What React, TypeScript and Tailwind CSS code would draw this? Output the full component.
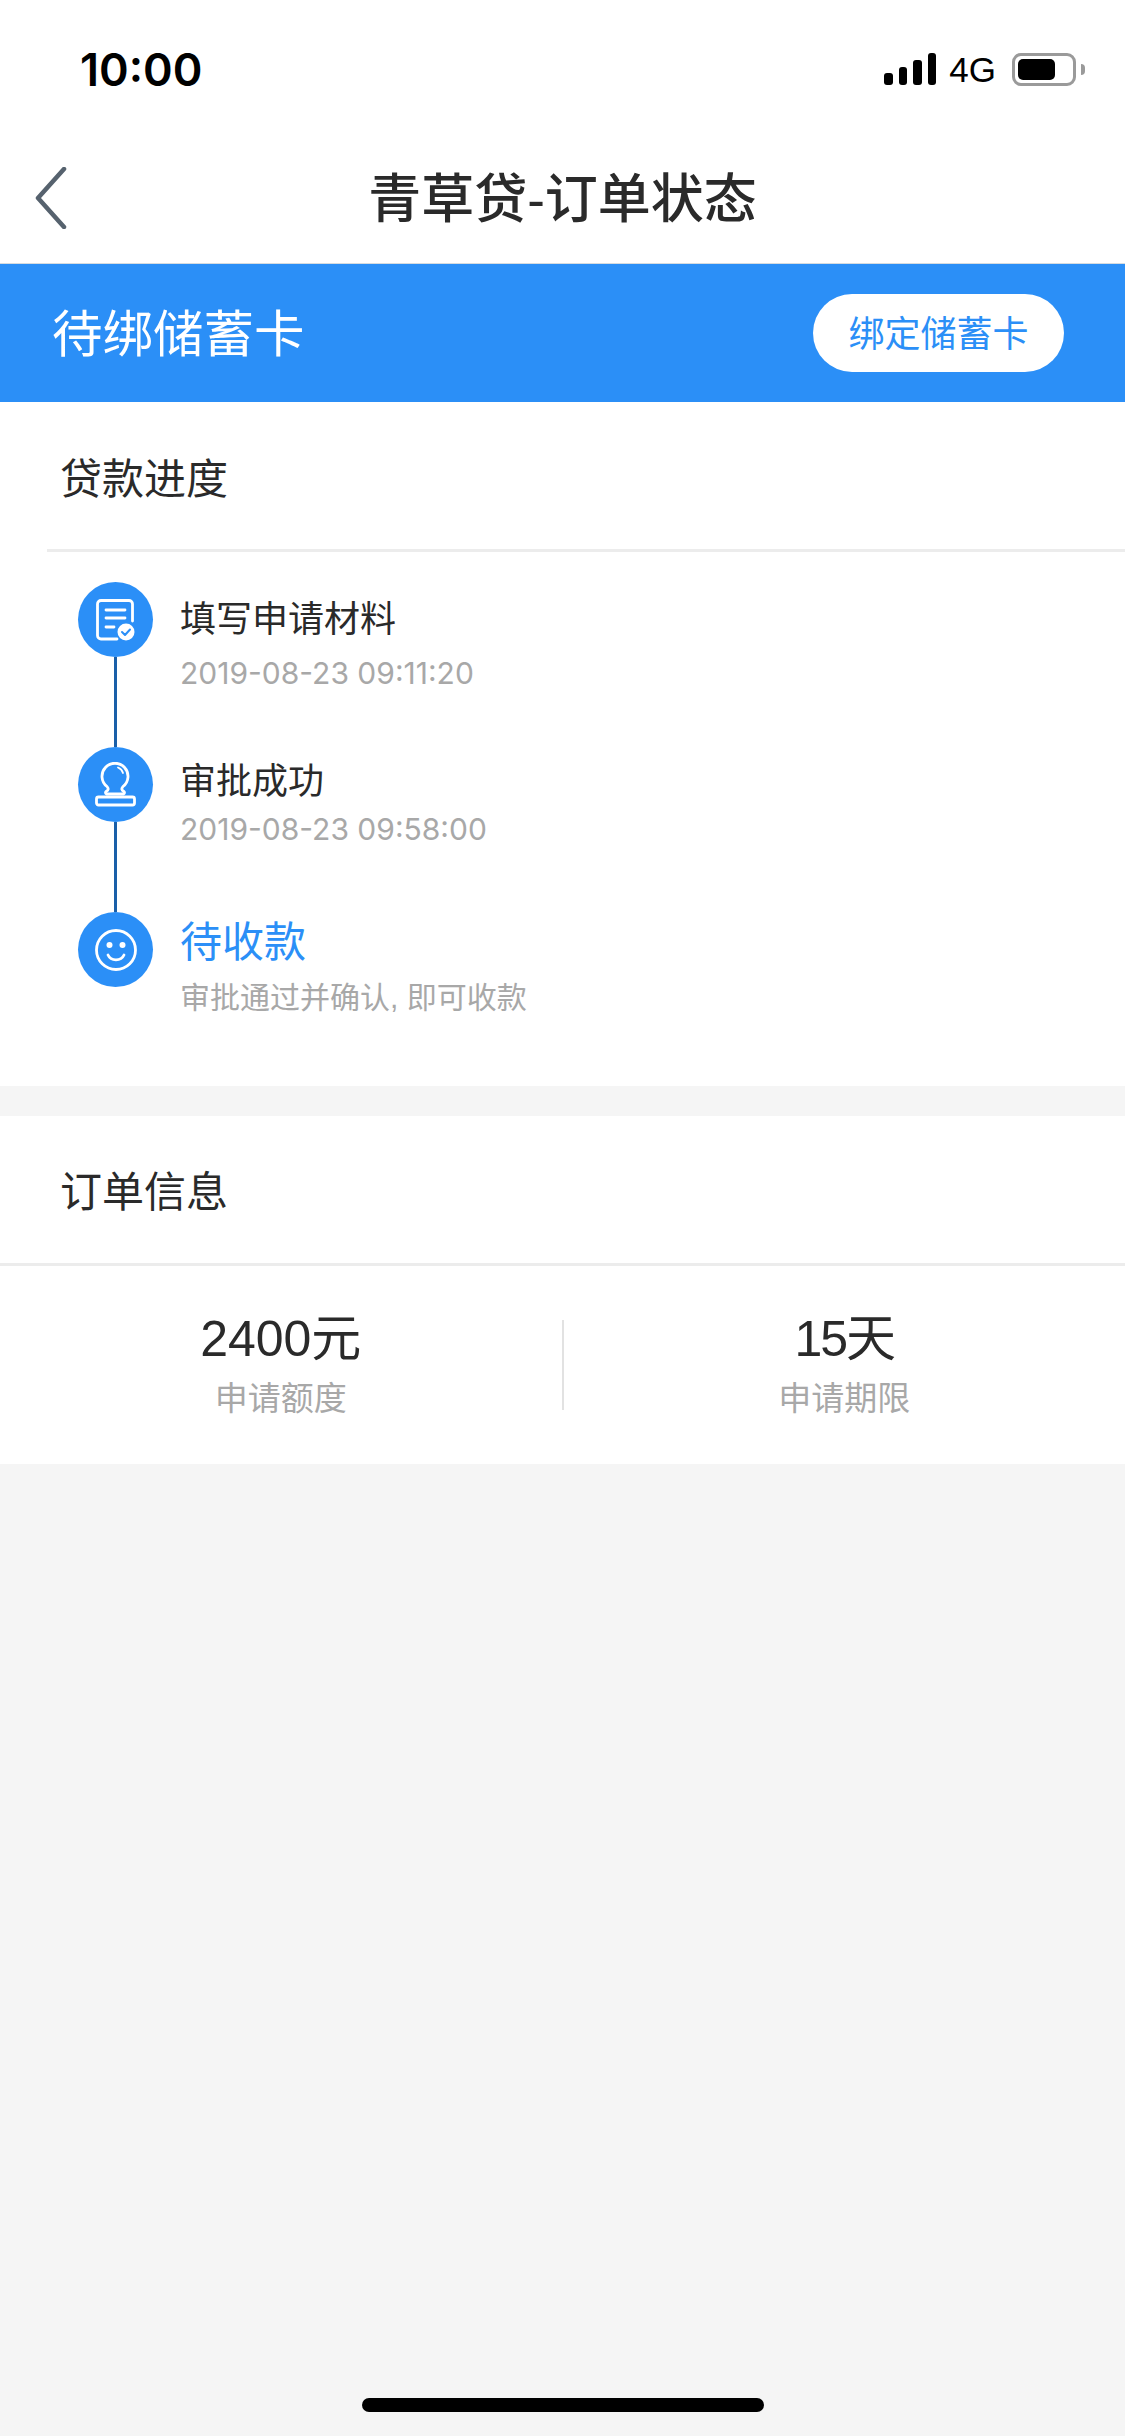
const steps = [
  {
    title: "填写申请材料",
    sub: "2019-08-23 09:11:20",
    icon: "doc",
    titleCls: "mt-[18px] text-[36px] leading-[40px]",
    subCls: "mt-[15px] font-['Inter'] text-[30px] leading-[36px] text-[#a8a8a8]",
  },
  {
    title: "审批成功",
    sub: "2019-08-23 09:58:00",
    icon: "stamp",
    titleCls: "mt-[15px] text-[36px] leading-[40px]",
    subCls: "mt-[9px] font-['Inter'] text-[30px] leading-[36px] text-[#a8a8a8]",
  },
  {
    title: "待收款",
    sub: "审批通过并确认, 即可收款",
    icon: "smile",
    titleCls: "mt-[6px] text-[42px] leading-[50px] text-[#2b8ff7]",
    subCls: "mt-[12px] text-[30px] leading-[36px] text-[#a8a8a8]",
  },
];

function StepIcon({ name }: { name: string }) {
  if (name === "doc") {
    return (
      <svg width="40" height="42" viewBox="0 0 40 42" fill="none" stroke="#fff" strokeWidth="2.8" strokeLinecap="round">
        <path d="M21 40H5a3.500 3.500 0 0 1-3.500-3.500V5A3.500 3.500 0 0 1 5 1.500h28A3.500 3.500 0 0 1 36.500 5v17" />
        <path d="M10 11h19M10 19h19M10 28h8" />
        <circle cx="30" cy="33" r="8.500" fill="#fff" stroke="none" />
        <path d="M26 33l3 3 5-5.500" stroke="#2b8ff7" strokeWidth="2" strokeLinejoin="round" />
      </svg>
    );
  }
  if (name === "stamp") {
    return (
      <svg width="41" height="45" viewBox="0 0 41 45" fill="none" stroke="#fff" strokeWidth="2.8" strokeLinecap="round" strokeLinejoin="round">
        <path d="M12 24.500A13 13 0 1 1 28 24.500C26.500 26.500 26 28 29 29.500a1.500 1.500 0 0 1-.5 2.500H11.500a1.500 1.500 0 0 1-.5-2.500C14 28 13.500 26.500 12 24.500z" />
        <path d="M23 5.500a8.500 8.500 0 0 1 5 5.500" strokeWidth="1.800" />
        <rect x="1.500" y="35" width="38" height="8" rx="2" />
      </svg>
    );
  }
  return (
    <svg width="44" height="44" viewBox="0 0 44 44" fill="none" stroke="#fff" strokeWidth="2.8" strokeLinecap="round">
      <circle cx="22" cy="22" r="19.500" />
      <circle cx="15.500" cy="17" r="3" fill="#fff" stroke="none" />
      <circle cx="28.500" cy="17" r="3" fill="#fff" stroke="none" />
      <path d="M14 27c3 6.500 13 6.500 16 0" />
    </svg>
  );
}

export default function App() {
  return (
    <div className="relative flex h-[2436px] w-[1125px] flex-col overflow-hidden bg-[#f5f5f5] font-['Liberation_Sans','Noto_Sans_CJK_SC',sans-serif] text-[#2a2a2a]">
      {/* status bar */}
      <div className="flex h-[132px] items-center justify-between bg-white pl-[80px] pr-[40px] pt-[6px] text-black">
        <span className="font-['Inter'] text-[45px] font-semibold leading-none">10:00</span>
        <div className="flex items-center">
          <div className="flex items-end gap-[6px]">
            <div className="h-[12px] w-[8.500px] rounded-[3px] bg-black" />
            <div className="h-[18px] w-[8.500px] rounded-[3px] bg-black" />
            <div className="h-[25px] w-[8.500px] rounded-[3px] bg-black" />
            <div className="h-[32px] w-[8.500px] rounded-[3px] bg-black" />
          </div>
          <span className="ml-[13px] text-[35px] leading-none">4G</span>
          <div className="ml-[16px] h-[33px] w-[64px] rounded-[9px] border-[3px] border-[#9a9a9a] p-[3px]">
            <div className="h-full w-[37px] rounded-[5px] bg-black" />
          </div>
          <div className="ml-[5px] h-[11px] w-[4px] rounded-r-[4px] bg-[#9a9a9a]" />
        </div>
      </div>

      {/* nav */}
      <div className="relative flex h-[132px] items-center justify-center border-b border-[#d5dbe0] bg-white pt-[3px]">
        <svg className="absolute left-[35px] top-[35px]" width="32" height="62" viewBox="0 0 32 62" fill="none" stroke="#56626e" strokeWidth="4.500" strokeLinecap="round" strokeLinejoin="round">
          <path d="M29 2L3 31l26 29" />
        </svg>
        <span className="text-[53px] font-medium leading-none">青草贷-订单状态</span>
      </div>

      {/* status banner */}
      <div className="flex h-[138px] items-center justify-between bg-[#2b8ff7] pl-[52px] pr-[61px]">
        <span className="pt-[4px] text-[50.500px] leading-none text-white">待绑储蓄卡</span>
        <button className="flex h-[78px] w-[251px] items-center justify-center rounded-full bg-white pt-[4px] text-[36px] leading-none text-[#2b8ff7]">
          绑定储蓄卡
        </button>
      </div>

      {/* progress */}
      <section className="bg-white pb-[59px]">
        <div className="ml-[47px] flex h-[150px] items-center border-b-[3px] border-[#ececec] pl-[13px] pt-[8px] text-[42px] leading-none">
          贷款进度
        </div>
        <div className="ml-[78px] mt-[30px] flex flex-col">
          {steps.map((s, i) => (
            <div key={s.title} className="flex h-[165px] last:h-[115px]">
              <div className="flex w-[75px] flex-col items-center">
                <div className="flex h-[75px] w-[75px] shrink-0 items-center justify-center rounded-full bg-[#2b8ff7]">
                  <StepIcon name={s.icon} />
                </div>
                {i < steps.length - 1 && <div className="w-[3px] grow bg-[#1a5fa8]" />}
              </div>
              <div className="ml-[27px]">
                <div className={s.titleCls}>{s.title}</div>
                <div className={s.subCls}>{s.sub}</div>
              </div>
            </div>
          ))}
        </div>
      </section>

      {/* order info */}
      <section className="mt-[30px] bg-white">
        <div className="flex h-[150px] items-center border-b-[3px] border-[#ececec] pl-[60px] pt-[7px] text-[42px] leading-none">
          订单信息
        </div>
        <div className="flex h-[198px] items-center">
          <div className="flex-1 pb-[1px] text-center">
            <div className="text-[50px] leading-[56px]">2400元</div>
            <div className="mt-[13px] text-[33px] leading-[38px] text-[#a8a8a8]">申请额度</div>
          </div>
          <div className="h-[90px] w-[2px] bg-[#e2e2e2]" />
          <div className="flex-1 pb-[1px] text-center">
            <div className="text-[50px] leading-[56px] tracking-[-2px]">15天</div>
            <div className="mt-[13px] text-[33px] leading-[38px] text-[#a8a8a8]">申请期限</div>
          </div>
        </div>
      </section>

      {/* home indicator */}
      <div className="absolute bottom-[24px] left-[362px] h-[14px] w-[402px] rounded-full bg-black" />
    </div>
  );
}
